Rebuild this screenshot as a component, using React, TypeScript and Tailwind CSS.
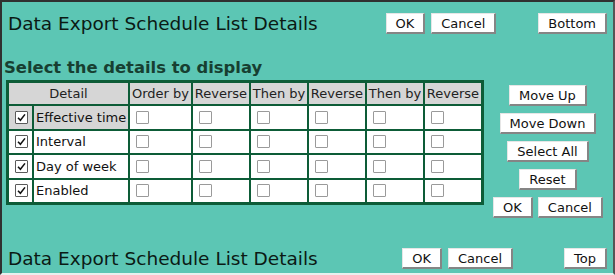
import React from 'react';

const btn =
  "h-[21px] px-[9px] bg-white text-[13px] leading-none text-[#111] border-t border-l border-r-2 border-b-2 border-t-[#e6e6e6] border-l-[#e6e6e6] border-r-[#858585] border-b-[#858585] whitespace-nowrap";

function Box({ checked }: { checked?: boolean }) {
  return (
    <span
      className={`inline-flex h-[13px] w-[13px] items-center justify-center rounded-[1px] border bg-white ${
        checked ? "border-[#5a5a5a]" : "border-[#9a9a9a]"
      }`}
    >
      {checked && (
        <svg viewBox="0 0 12 12" className="h-[11px] w-[11px]">
          <path d="M2.2 6.2 L4.8 9 L9.8 2.6" fill="none" stroke="#111" strokeWidth="1.7" />
        </svg>
      )}
    </span>
  );
}

const columns = ["Order by", "Reverse", "Then by", "Reverse", "Then by", "Reverse"];
const rows = ["Effective time", "Interval", "Day of week", "Enabled"];

function TitleBar({ groupGap, nav }: { groupGap: string; nav: string }) {
  return (
    <div className="flex items-start pl-[6px] pr-[6px]">
      <h1 className="text-[18.5px] leading-[21px] text-[#0b1a14] font-normal whitespace-nowrap">
        Data Export Schedule List Details
      </h1>
      <div className={`ml-auto flex gap-[6px] ${groupGap}`}>
        <button className={btn}>OK</button>
        <button className={btn}>Cancel</button>
      </div>
      <button className={btn}>{nav}</button>
    </div>
  );
}

export default function App() {
  return (
    <div className="w-[615px] h-[275px] overflow-hidden bg-[#5cc6b4] font-['DejaVu_Sans',sans-serif] border-2 border-t-[#303030] border-l-[#303030] border-r-[#555] border-b-[#e8f0ee] pt-[11px]">
      <TitleBar groupGap="mr-[42px]" nav="Bottom" />

      <div className="mt-[24px] pl-[2px] text-[16.4px] leading-[19px] font-bold text-[#173f31]">
        Select the details to display
      </div>

      <div className="mt-[3px] flex items-start">
        <div className="ml-[4px] grid grid-cols-[23px_94px_61px_56px_56px_56px_56px_56px] gap-[2px] p-[3px] bg-[#0d5c37] text-[13px] text-[#111]">
          <div className="col-span-2 h-[21px] bg-[#d6d6d6] flex items-center justify-center text-[#222]">
            Detail
          </div>
          {columns.map((c, i) => (
            <div key={i} className="h-[21px] bg-[#d6d6d6] flex items-center justify-center text-[#222] whitespace-nowrap">
              {c}
            </div>
          ))}
          {rows.map((r, ri) => (
            <React.Fragment key={r}>
              <div className={`h-[22.5px] flex items-center justify-center pl-[2px] ${ri === 0 ? "bg-[#d6d6d6]" : "bg-white"}`}>
                <Box checked />
              </div>
              <div className={`h-[22.5px] flex items-center pl-[2px] whitespace-nowrap ${ri === 0 ? "bg-[#d6d6d6]" : "bg-white"}`}>
                {r}
              </div>
              {columns.map((_, ci) => (
                <div key={ci} className="h-[22.5px] bg-white flex items-center pl-[6px]">
                  <Box />
                </div>
              ))}
            </React.Fragment>
          ))}
        </div>

        <div className="ml-[4px] w-[120px] pt-[5px] flex flex-col items-center gap-[7px]">
          <button className={btn}>Move Up</button>
          <button className={btn}>Move Down</button>
          <button className={btn}>Select All</button>
          <button className={btn}>Reset</button>
          <div className="flex gap-[5px]">
            <button className={btn}>OK</button>
            <button className={btn}>Cancel</button>
          </div>
        </div>
      </div>

      <div className="mt-[30px]">
        <TitleBar groupGap="mr-[51px]" nav="Top" />
      </div>
    </div>
  );
}
